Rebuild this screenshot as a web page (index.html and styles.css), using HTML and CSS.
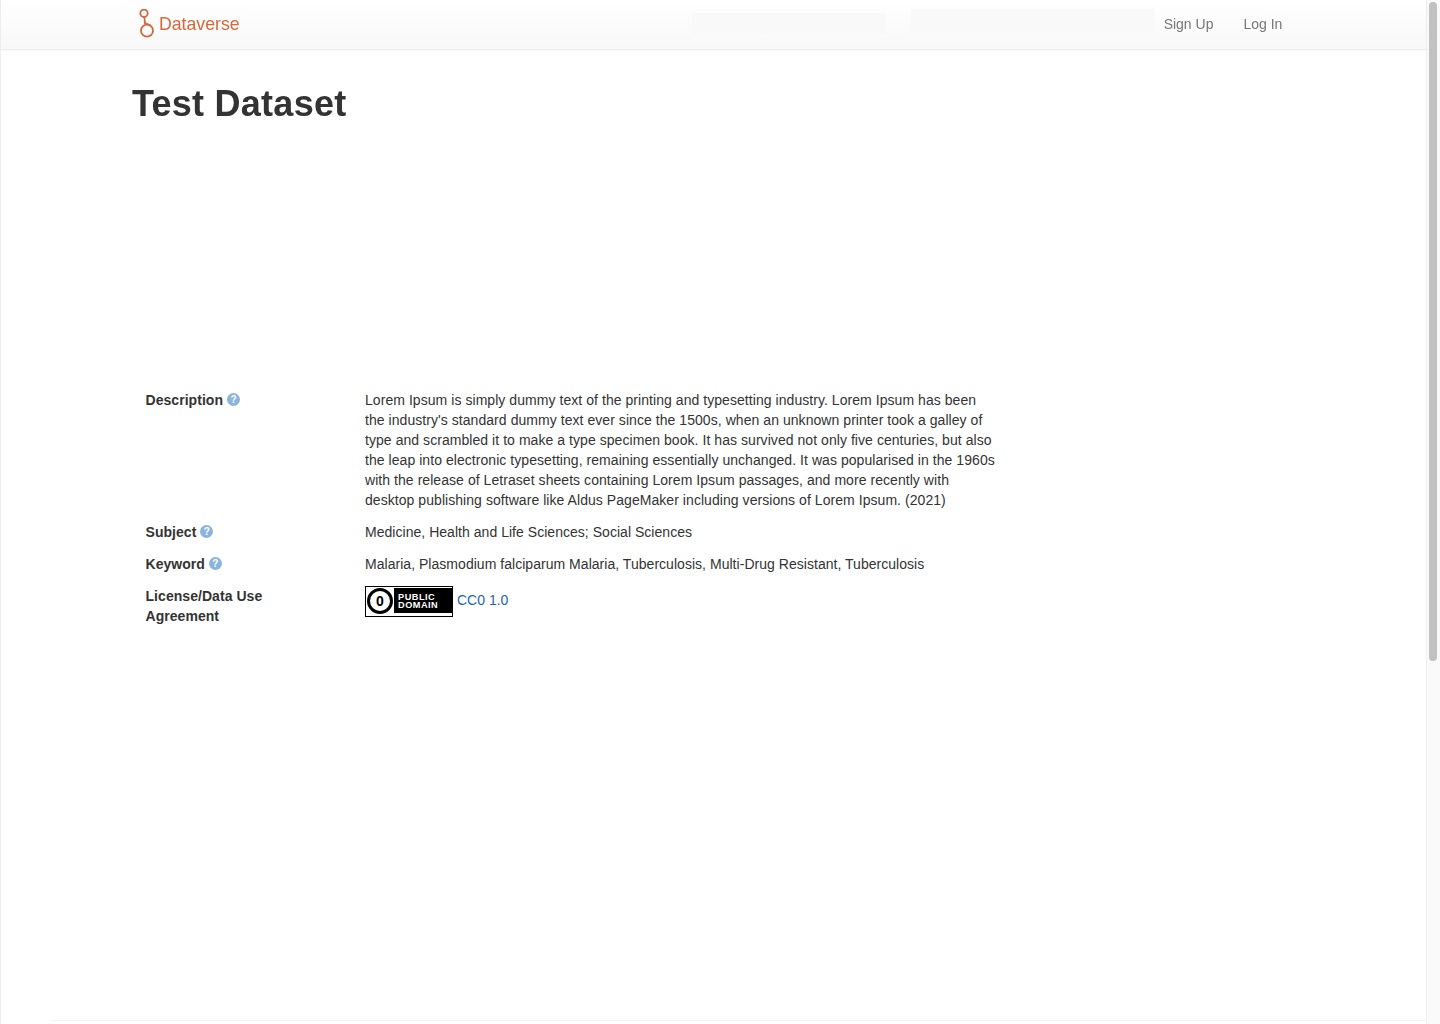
FILE: index.html
```html
<!DOCTYPE html>
<html lang="en">
<head>
<meta charset="utf-8">
<title>Test Dataset - Dataverse</title>
<link rel="stylesheet" href="styles.css">
</head>
<body>
<div class="window">
  <div class="page">
    <header class="topbar">
      <a class="brand" href="#">
        <svg class="brand-icon" width="16" height="29" viewBox="0 0 16 29" aria-hidden="true">
          <circle cx="6" cy="4.3" r="3.7"/>
          <circle cx="9" cy="21.7" r="6"/>
          <path d="M6.4 8 L7 14.5 L8 15.7"/>
          <path d="M7 14 L12.5 16.6"/>
        </svg>
        <span class="brand-name">Dataverse</span>
      </a>
      <div class="ghost ghost-one"></div>
      <div class="ghost ghost-two"></div>
      <nav class="nav">
        <a href="#">Sign Up</a>
        <a href="#">Log In</a>
      </nav>
    </header>
    <main class="content">
      <h1 class="title">Test Dataset</h1>
      <dl class="meta">
        <div class="meta-row">
          <dt>Description <span class="help">?</span></dt>
          <dd class="desc">Lorem Ipsum is simply dummy text of the printing and typesetting industry. Lorem Ipsum has been the industry's standard dummy text ever since the 1500s, when an unknown printer took a galley of type and scrambled it to make a type specimen book. It has survived not only five centuries, but also the leap into electronic typesetting, remaining essentially unchanged. It was popularised in the 1960s with the release of Letraset sheets containing Lorem Ipsum passages, and more recently with desktop publishing software like Aldus PageMaker including versions of Lorem Ipsum. (2021)</dd>
        </div>
        <div class="meta-row">
          <dt>Subject <span class="help">?</span></dt>
          <dd>Medicine, Health and Life Sciences; Social Sciences</dd>
        </div>
        <div class="meta-row">
          <dt>Keyword <span class="help">?</span></dt>
          <dd>Malaria, Plasmodium falciparum Malaria, Tuberculosis, Multi-Drug Resistant, Tuberculosis</dd>
        </div>
        <div class="meta-row">
          <dt>License/Data Use Agreement</dt>
          <dd class="license">
            <span class="badge">
              <span class="cc-zero"><span>0</span></span>
              <span class="badge-text">PUBLIC<br>DOMAIN</span>
            </span>
            <a class="license-link" href="#">CC0 1.0</a>
          </dd>
        </div>
      </dl>
    </main>
  </div>
  <div class="scrollbar"><div class="thumb"></div></div>
</div>
</body>
</html>
```
FILE: styles.css
```css
* { box-sizing: border-box; }
html, body { margin: 0; height: 100%; overflow: hidden; background: #fff; }
body { font-family: "Liberation Sans", Arial, sans-serif; font-size: 14px; line-height: 20px; color: #333; }
a { text-decoration: none; }

.window { display: flex; height: 1024px; }
.page { flex: 1; min-width: 0; border-left: 1px solid #f0f0f0; position: relative; }
.page::after { content: ""; position: absolute; left: 50px; right: 0; bottom: 3px; height: 1px; background: #f5f5f5; }

.topbar {
  display: flex; align-items: center; height: 50px; padding: 0 0 2px 137px;
  background: linear-gradient(to bottom, #fff 0%, #f8f8f8 100%);
  border-bottom: 1px solid #ececec;
  box-shadow: 0 1px 3px rgba(0,0,0,.04);
}
.brand { display: flex; align-items: center; gap: 5px; color: #d9673a; filter: blur(.35px); }
.brand-icon { display: block; }
.brand-icon circle, .brand-icon path { fill: none; stroke: #d4683c; stroke-width: 1.8; }
.brand-name { font-size: 17.7px; }

.ghost { background: #f9f9f9; }
.ghost-one { width: 194px; height: 21px; margin: 0 0 13px 452px; align-self: flex-end; }
.ghost-two { width: 244px; height: 27px; margin: 9px 0 0 25px; align-self: flex-start; }

.nav { display: flex; gap: 30px; margin-left: 9px; filter: blur(.4px); }
.nav a { color: #777; font-size: 14px; }

.content { padding-left: 131px; }
.title { margin: 34px 0 0; font-size: 36px; line-height: 40px; font-weight: 700; letter-spacing: .25px; color: #333; filter: blur(.3px); }

.meta { margin: 266px 0 0 13px; width: 870px; letter-spacing: .034px; }
.meta-row { display: grid; grid-template-columns: 220px 1fr; margin-bottom: 12px; }
.meta dt { font-weight: 700; width: 150px; padding-left: .5px; letter-spacing: .05px; }
.meta dd { margin: 0; width: 632px; color: #333; }
.meta dd.desc { letter-spacing: .055px; }

.help {
  display: inline-block; width: 13px; height: 13px; border-radius: 50%;
  background: #8ab4dc; color: #fff; font-size: 10px; line-height: 13px; font-weight: 700; text-align: center; vertical-align: 2px;
}

.meta dd.license { display: flex; align-items: flex-start; gap: 4px; height: 31px; }
.badge {
  display: flex; align-items: center; width: 88px; height: 31px;
  background: #fff; border: 1px solid #000;
  color: #fff; font-size: 9.2px; line-height: 8px; font-weight: 700; letter-spacing: .5px;
}
.cc-zero {
  flex: none; display: flex; align-items: center; justify-content: center; width: 26px; height: 26px; margin: 0 1px 1px 1px;
  background: #fff; border-radius: 50%; color: #000; border: 3px solid #000;
}
.cc-zero span { font-size: 14px; line-height: 1; font-weight: 700; letter-spacing: 0; }
.badge-text { flex: 1; align-self: flex-start; height: 25px; margin-top: 1px; padding: 5px 0 0 4px; background: #000; }
.license-link { color: #1b66b3; margin-top: 4px; letter-spacing: 0; }

.scrollbar { flex: none; width: 14px; background: #fafafa; border-left: 1px solid #efefef; padding: 2px 2px 0 2px; }
.thumb { width: 8px; height: 659px; border-radius: 4px; background: #c1c1c1; }
```
